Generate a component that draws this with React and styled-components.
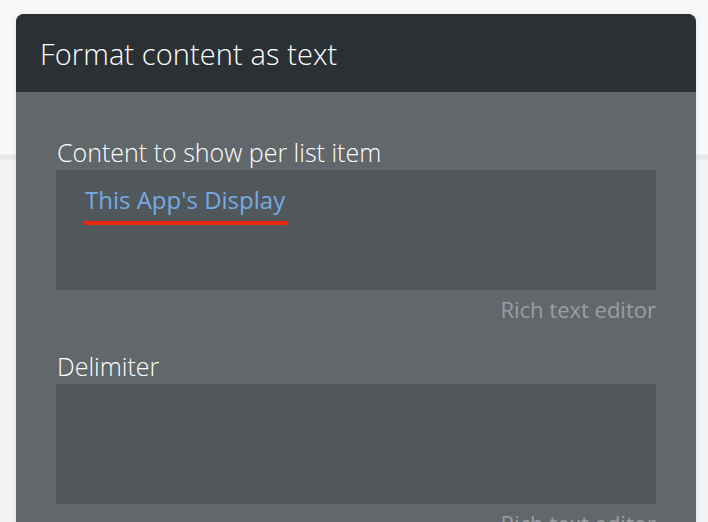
import React from "react";
import styled, { createGlobalStyle } from "styled-components";

const Global = createGlobalStyle`
  html, body {
    margin: 0;
    padding: 0;
    height: 100%;
    overflow: hidden;
  }
  body {
    background: linear-gradient(
      to bottom,
      #f8f8f9 0,
      #f8f8f9 154px,
      #e6e6e8 156px,
      #ececee 159px,
      #f4f4f5 162px,
      #f4f4f5 100%
    );
    font-family: "Open Sans", "Noto Sans", sans-serif;
  }
`;

const Page = styled.div`
  padding: 14px 12px 0 16px;
`;

const Modal = styled.div`
  width: 680px;
  height: 520px;
  border-radius: 8px 8px 0 0;
  overflow: hidden;
  background: #62676b;
  box-shadow: 0 0 6px rgba(0, 0, 0, 0.08);
`;

const Header = styled.div`
  height: 78px;
  background: #2a3033;
  display: flex;
  align-items: center;
  padding: 0 24px;
  color: #ffffff;
  font-size: 29px;
  font-weight: 300;
  letter-spacing: 0.1px;
`;

const Body = styled.div`
  padding: 44px 40px 0 40px;
  display: flex;
  flex-direction: column;
`;

const Field = styled.div`
  display: flex;
  flex-direction: column;
  margin-bottom: 22px;
`;

const Label = styled.div`
  color: #ffffff;
  font-size: 25px;
  font-weight: 300;
  line-height: 32px;
  padding: 0 0 2px 1px;
`;

const Editor = styled.div`
  height: 120px;
  background: #52575b;
  padding: 13px 28px;
  box-sizing: border-box;
`;

const Token = styled.span`
  display: inline-block;
  color: #72abe3;
  font-size: 24px;
  line-height: 32px;
  border-bottom: 4px solid #e8280e;
  padding: 0 2px 5px 1px;
  margin-top: 1px;
`;

const Hint = styled.div`
  align-self: flex-end;
  color: #9a9ea2;
  font-size: 22px;
  line-height: 38px;
`;

export default function App() {
  return (
    <>
      <Global />
      <Page>
        <Modal>
          <Header>Format content as text</Header>
          <Body>
            <Field>
              <Label>Content to show per list item</Label>
              <Editor>
                <Token>This App's Display</Token>
              </Editor>
              <Hint>Rich text editor</Hint>
            </Field>
            <Field>
              <Label>Delimiter</Label>
              <Editor />
              <Hint>Rich text editor</Hint>
            </Field>
          </Body>
        </Modal>
      </Page>
    </>
  );
}
